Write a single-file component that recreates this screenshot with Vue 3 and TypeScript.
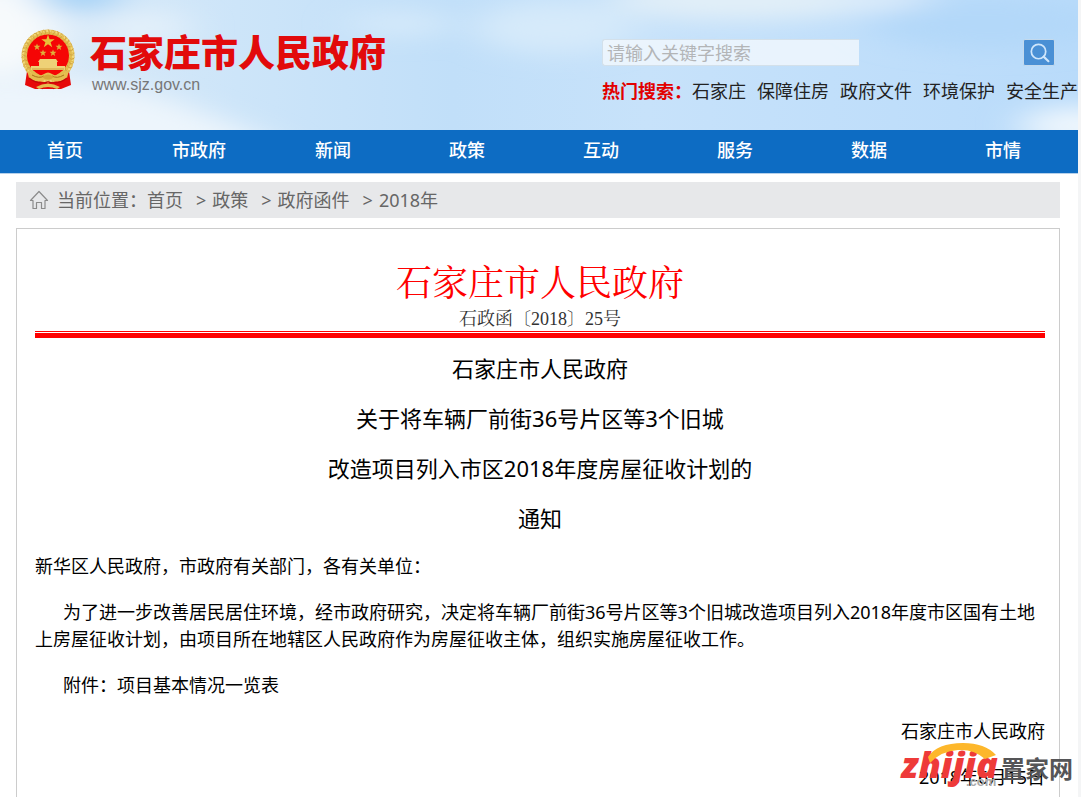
<script setup lang="ts">
import { ref } from 'vue'

const keyword = ref('')
const hotWords: string[] = ['石家庄', '保障住房', '政府文件', '环境保护', '安全生产']
const navItems: string[] = ['首页', '市政府', '新闻', '政策', '互动', '服务', '数据', '市情']
const crumbs: string[] = ['首页', '政策', '政府函件', '2018年']
const headings: string[] = [
  '石家庄市人民政府',
  '关于将车辆厂前街36号片区等3个旧城',
  '改造项目列入市区2018年度房屋征收计划的',
  '通知',
]
const smallStars = [
  { x: 17, y: 19 },
  { x: 39, y: 19 },
  { x: 23, y: 25 },
  { x: 33, y: 25 },
]
const ears: number[] = Array.from({ length: 25 }, (_, i) => -125 + i * 10.4)
</script>

<template>
  <div class="page">
    <header class="banner">
      <svg class="sky" viewBox="0 0 1078 130" preserveAspectRatio="none" aria-hidden="true">
        <defs>
          <filter id="soft" filterUnits="userSpaceOnUse" x="-150" y="-100" width="1400" height="330">
            <feGaussianBlur stdDeviation="20 11" />
          </filter>
          <linearGradient id="air" x1="0" y1="0" x2="1" y2="0">
            <stop offset="0" stop-color="#dcebf8" />
            <stop offset="0.22" stop-color="#cde5f9" />
            <stop offset="0.42" stop-color="#c1dff9" />
            <stop offset="0.6" stop-color="#c7e2fa" />
            <stop offset="1" stop-color="#b9dbfa" />
          </linearGradient>
        </defs>
        <rect width="1078" height="130" fill="url(#air)" />
        <g filter="url(#soft)">
          <ellipse cx="0" cy="30" rx="60" ry="48" fill="#f7fafc" />
          <path d="M-60 85Q90 70 170 100T290 150L-60 170z" fill="#edf5fc" />
          <ellipse cx="140" cy="28" rx="50" ry="18" fill="#e3f0fa" />
          <ellipse cx="80" cy="-4" rx="46" ry="14" fill="#a0d0f6" />
          <ellipse cx="400" cy="24" rx="55" ry="12" fill="#d6eafa" />
          <ellipse cx="555" cy="28" rx="80" ry="26" fill="#d6eafa" />
          <ellipse cx="740" cy="0" rx="130" ry="20" fill="#e2eff8" />
          <ellipse cx="880" cy="0" rx="60" ry="10" fill="#e4f0fa" />
          <ellipse cx="990" cy="24" rx="120" ry="26" fill="#b3d8f9" />
          <ellipse cx="1080" cy="126" rx="60" ry="20" fill="#eef6fd" />
        </g>
      </svg>

      <a class="brand" href="#">
        <svg class="emblem" viewBox="0 0 56 62" aria-hidden="true">
          <path d="M7 43 5 57l10 4h26l10-4-2-14-8 7H15z" fill="#e60a0a" />
          <circle cx="28" cy="28" r="26.500" fill="#e3bc4e" />
          <circle cx="28" cy="28" r="25" fill="none" stroke="#f2d97c" stroke-width="2" stroke-dasharray="2 1.200" />
          <path
            v-for="a in ears"
            :key="a"
            d="M28 1.500q4 2.500 0 5.500"
            fill="none"
            stroke="#c3943a"
            stroke-width="0.600"
            :transform="`rotate(${a} 28 28)`"
          />
          <circle cx="28" cy="27.500" r="21" fill="#f50505" />
          <path
            d="m28 6.500 1.600 4.800 5.100 0-4.100 3 1.600 4.900-4.200-3-4.200 3 1.600-4.900-4.100-3 5.100 0z"
            fill="#e8c038"
          />
          <path
            v-for="(s, i) in smallStars"
            :key="i"
            d="M0-3.600.900-1.200 3.400-1.200 1.400.400 2.200 2.900 0 1.400-2.200 2.900-1.400.400-3.400-1.200-.900-1.200z"
            fill="#e0b03a"
            :transform="`translate(${s.x} ${s.y})`"
          />
          <path d="M20 31h16l2 3H18zM19 34h18v4H19zM11 38h34v4H11z" fill="#eed177" />
          <path d="M12 41h32" stroke="#c8932e" stroke-width="0.800" />
          <path d="M7 42q10 9 17 4 4-3 8 0 7 5 17-4l-2 8q-9 6-15 2-4-3-8 0-6 4-15-2z" fill="#e5bd4e" />
          <path d="M12 47q7 4 12 1M44 47q-7 4-12 1" fill="none" stroke="#a97519" />
          <path d="M22 49q6-5 12 0-6 5-12 0z" fill="#d6a63a" />
          <path d="M9 50q9 7 18 4l-5 7M47 50q-9 7-18 4l5 7" fill="none" stroke="#c50808" stroke-width="1.200" />
          <path d="M16 59q12-7 24 0l-3 2q-9-4-18 0z" fill="#e5bd4e" />
        </svg>
        <span class="brand-text">
          <strong>石家庄市人民政府</strong>
          <span class="domain">www.sjz.gov.cn</span>
        </span>
      </a>

      <div class="search">
        <form class="search-row" @submit.prevent>
          <input v-model="keyword" type="text" aria-label="请输入关键字搜索" placeholder="请输入关键字搜索" />
          <button type="submit" aria-label="搜索">
            <svg viewBox="0 0 31 26" aria-hidden="true">
              <circle cx="15" cy="12" r="7.500" fill="none" stroke="#cfe6fb" stroke-width="1.800" />
              <path d="m20.300 17.300 5 4.700" stroke="#cfe6fb" stroke-width="2.200" stroke-linecap="round" />
            </svg>
          </button>
        </form>
        <div class="hot">
          <b>热门搜索：</b>
          <a v-for="w in hotWords" :key="w" href="#">{{ w }}</a>
        </div>
      </div>
    </header>

    <nav class="menu">
      <a v-for="n in navItems" :key="n" href="#">{{ n }}</a>
    </nav>

    <div class="crumbs">
      <svg class="home" viewBox="0 0 20 20" aria-hidden="true">
        <path
          d="M1.500 10.500 10 1.500l8.500 9H16v8h-3.500v-6h-5v6H4v-8z"
          fill="none"
          stroke="#8b8b8b"
          stroke-width="1.200"
          stroke-linejoin="round"
        />
      </svg>
      <span>当前位置：</span>
      <template v-for="(c, i) in crumbs" :key="c">
        <span v-if="i > 0" class="sep">&gt;</span>
        <a href="#">{{ c }}</a>
      </template>
    </div>

    <article class="doc">
      <h1>石家庄市人民政府</h1>
      <p class="number">石政函〔2018〕25号</p>
      <div class="rule"></div>
      <div class="headings">
        <h2 v-for="h in headings" :key="h">{{ h }}</h2>
      </div>
      <p>新华区人民政府，市政府有关部门，各有关单位：</p>
      <p class="indent">为了进一步改善居民居住环境，经市政府研究，决定将车辆厂前街36号片区等3个旧城改造项目列入2018年度市区国有土地上房屋征收计划，由项目所在地辖区人民政府作为房屋征收主体，组织实施房屋征收工作。</p>
      <p class="indent">附件：项目基本情况一览表</p>
      <p class="sign">石家庄市人民政府</p>
      <p class="sign">2018年6月15日</p>
    </article>

    <svg class="mark" viewBox="0 0 174 52" role="img" aria-label="zhijia.com 置家网">
      <text class="mark-cn" x="100" y="36">置家网</text>
      <text class="mark-com" x="65" y="44">.com</text>
      <text class="mark-z" x="0" y="36">zhijia</text>
      <path d="M27 15Q36 1 62 1 84 1 95 13l-11 4Q73 7 57 8 40 9 29 21z" fill="#fdb72b" />
    </svg>
  </div>
</template>

<style>
body {
  margin: 0;
  background: #f4f5f6;
}
</style>

<style scoped>
.page {
  position: relative;
  display: flex;
  flex-direction: column;
  min-height: 100vh;
  margin-right: 3px;
  background: #fff;
  color: #000;
  font-family: "Noto Sans", "Noto Sans CJK SC", sans-serif;
  font-size: 18px;
}
a {
  color: inherit;
  text-decoration: none;
}
h1,
h2,
p {
  margin: 0;
  font-weight: 400;
}
.banner {
  position: relative;
  display: flex;
  justify-content: space-between;
  height: 130px;
}
.sky {
  position: absolute;
  inset: 0;
  width: 100%;
  height: 100%;
}
.brand {
  position: relative;
  display: flex;
  align-items: flex-start;
  gap: 14px;
  padding: 28px 0 0 20px;
}
.emblem {
  width: 56px;
  height: 62px;
}
.brand-text {
  display: flex;
  flex-direction: column;
  white-space: nowrap;
}
.brand-text strong {
  color: #e20a0b;
  font-family: "Noto Sans CJK SC", sans-serif;
  font-size: 37px;
  font-weight: 900;
  line-height: 46px;
}
.domain {
  padding-left: 2px;
  color: #777;
  font-family: "Liberation Sans", sans-serif;
  font-size: 16px;
  line-height: 22px;
}
.search {
  position: relative;
  width: 476px;
  padding-top: 39px;
}
.search-row {
  display: flex;
  justify-content: space-between;
  padding-right: 23px;
}
.search input {
  box-sizing: border-box;
  width: 257px;
  height: 27px;
  padding: 1px 4px 0;
  border: 1px solid #d3e0ea;
  border-right: 0;
  border-radius: 3px 0 0 3px;
  background: rgba(246, 250, 254, 0.75);
  font: inherit;
  outline: 0;
}
.search input::placeholder {
  color: #b3b5b7;
  opacity: 1;
}
.search button {
  width: 32px;
  height: 27px;
  padding: 0;
  border: 1px solid #c3d9ec;
  border-radius: 2px;
  box-sizing: border-box;
  background: #4a90d5;
}
.search button svg {
  display: block;
  width: 100%;
  height: 100%;
}
.hot {
  display: flex;
  gap: 11px;
  margin-top: 12px;
  color: #222;
  line-height: 26px;
  white-space: nowrap;
}
.hot b {
  margin-right: -11px;
  color: #e20000;
}
.menu {
  display: grid;
  grid-template-columns: repeat(8, 1fr);
  height: 43px;
  padding-right: 6px;
  border-bottom: 1px solid #b5d0ea;
  background: #0d6cc3;
  background-clip: padding-box;
  color: #fff;
  font-weight: 500;
  line-height: 40px;
  text-align: center;
}
.menu a {
  padding-right: 4px;
}
.crumbs {
  display: flex;
  align-items: center;
  height: 36px;
  margin: 8px 18px 0 16px;
  padding-left: 13px;
  background: #e7e8ea;
  color: #666;
  line-height: 38px;
  white-space: nowrap;
}
.home {
  width: 20px;
  height: 20px;
  margin-right: 8px;
}
.sep {
  margin: 0 6px 0 13px;
}
.doc {
  flex: 1;
  margin: 10px 18px 0 16px;
  padding: 28px 14px 4px 18px;
  border: 1px solid #ccc;
  border-bottom: 0;
  line-height: 27px;
}
.doc h1 {
  padding-bottom: 4px;
  color: #f00;
  font-family: "Noto Serif CJK SC", "SimSun", serif;
  font-size: 36px;
  line-height: 48px;
  text-align: center;
}
.doc .number {
  margin: 0;
  color: #333;
  font-family: "Liberation Serif", "Noto Serif CJK SC", serif;
  line-height: 20px;
  text-align: center;
}
.rule {
  height: 1px;
  margin-top: 2px;
  border-top: 1px solid #f00;
  border-bottom: 5px solid #f00;
}
.headings {
  margin: 5px 0 10px;
  text-align: center;
}
.doc h2 {
  font-size: 22px;
  line-height: 50px;
}
.doc p + p {
  margin-top: 19px;
}
.indent {
  text-indent: 28px;
}
.sign {
  text-align: right;
}
.mark {
  position: absolute;
  right: 3px;
  bottom: 3px;
  width: 174px;
  height: 52px;
  overflow: visible;
}
.mark-z {
  fill: #ee3a39;
  font: italic 800 36px "Open Sans", sans-serif;
}
.mark-com {
  fill: #aaa;
  font: 700 13px "Liberation Sans", sans-serif;
}
.mark-cn {
  fill: #555557;
  font: 700 24px "Noto Sans CJK SC", sans-serif;
}
</style>
